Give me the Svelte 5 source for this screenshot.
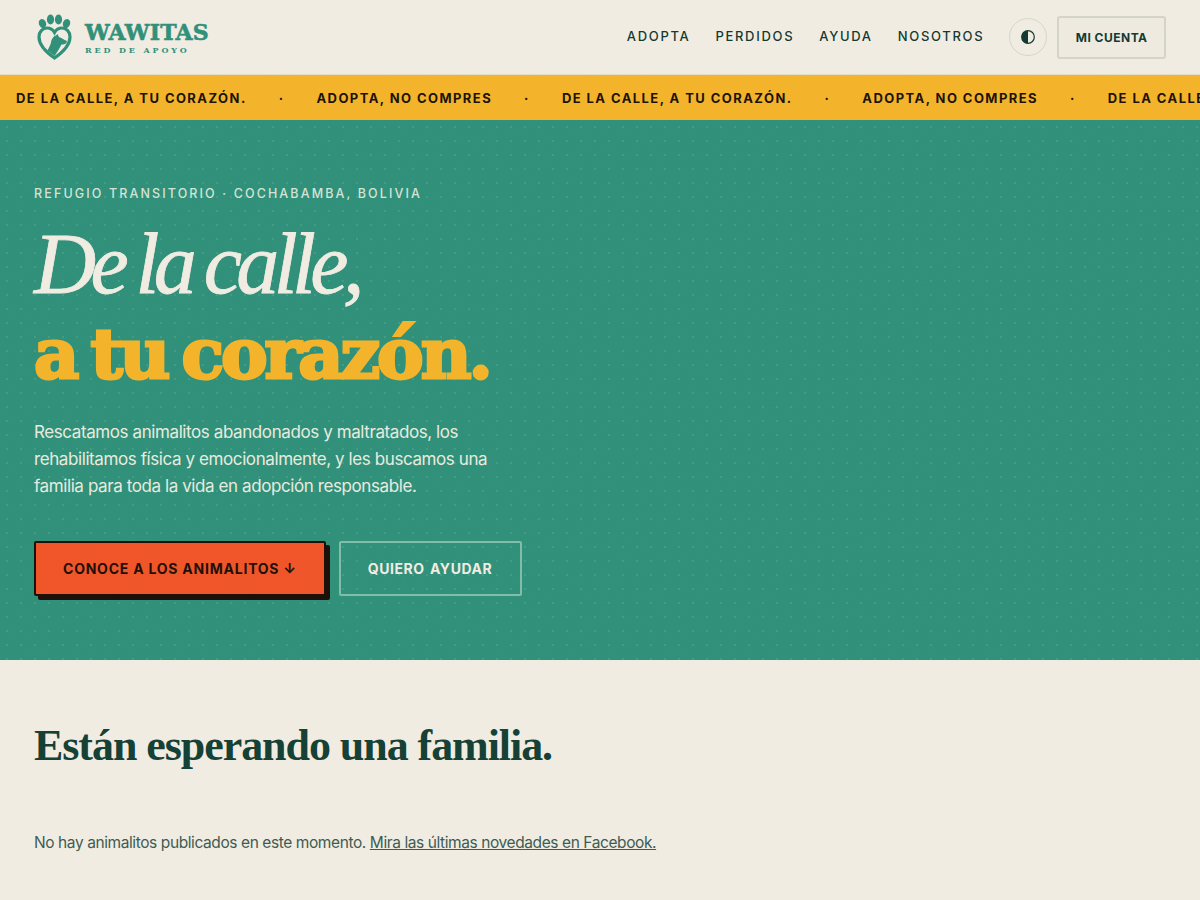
<script>
  const links = ['Adopta', 'Perdidos', 'Ayuda', 'Nosotros']
  const ticker = ['De la calle, a tu corazón.', 'Adopta, no compres', 'De la calle, a tu corazón.', 'Adopta, no compres', 'De la calle, a tu corazón.']
</script>

<header class="topbar">
  <a class="brand" href="#inicio">
    <svg class="logo" viewBox="0 0 38 48" width="38" height="48" aria-hidden="true">
      <ellipse cx="6.5" cy="9.5" rx="3.6" ry="4.6" transform="rotate(-20 6.5 9.5)" />
      <ellipse cx="14.5" cy="5.5" rx="3.6" ry="5" />
      <ellipse cx="22.5" cy="5.5" rx="3.6" ry="5" />
      <ellipse cx="30.5" cy="9.5" rx="3.6" ry="4.6" transform="rotate(20 30.5 9.5)" />
      <path class="heart" d="M18.5 44 C12 39.5 3 32.5 3 23 C3 17.5 7 14 11 14 C14.3 14 17 15.8 18.5 18.5 C20 15.8 22.7 14 26 14 C30 14 34 17.5 34 23 C34 32.5 25 39.5 18.5 44 Z" />
      <path d="M11.5 36.5 C13 33 14.5 31 15 28.5 C15.5 25 17.5 22 20 21.5 L21.5 20 L23 23 C25 24 28 25.5 31 27 C31 29.5 28.5 31 25.5 30.5 C24 33.5 22 37 18.5 42 Z" />
    </svg>
    <span class="brand-text">
      <strong>WAWITAS</strong>
      <small>RED DE APOYO</small>
    </span>
  </a>
  <nav class="nav">
    {#each links as link}
      <a href="#{link.toLowerCase()}">{link}</a>
    {/each}
  </nav>
  <button class="theme" aria-label="Cambiar tema">
    <svg viewBox="0 0 16 16" width="16" height="16">
      <circle cx="8" cy="8" r="6.3" fill="none" stroke="currentColor" stroke-width="1.2" />
      <path d="M8 1.7 A6.3 6.3 0 0 0 8 14.3 Z" fill="currentColor" />
    </svg>
  </button>
  <a class="account" href="#cuenta">Mi cuenta</a>
</header>

<div class="ticker">
  {#each ticker as item, i}
    <span>{item}</span>
    {#if i < ticker.length - 1}<i>·</i>{/if}
  {/each}
</div>

<section class="hero">
  <p class="eyebrow">Refugio transitorio · Cochabamba, Bolivia</p>
  <h1>
    <em>De la calle,</em>
    <b>a tu corazón.</b>
  </h1>
  <p class="lead">
    Rescatamos animalitos abandonados y maltratados, los rehabilitamos física y emocionalmente, y les buscamos una familia para toda la vida en adopción responsable.
  </p>
  <div class="actions">
    <a class="btn primary" href="#animalitos">Conoce a los animalitos <span class="arrow">↓</span></a>
    <a class="btn ghost" href="#ayuda">Quiero ayudar</a>
  </div>
</section>

<section class="waiting">
  <h2>Están esperando una familia.</h2>
  <p>No hay animalitos publicados en este momento. <a href="#facebook">Mira las últimas novedades en Facebook.</a></p>
</section>

<svg class="grain" aria-hidden="true">
  <filter id="grain-noise">
    <feTurbulence type="fractalNoise" baseFrequency="0.8" numOctaves="2" stitchTiles="stitch" />
    <feColorMatrix type="saturate" values="0" />
  </filter>
  <rect width="100%" height="100%" filter="url(#grain-noise)" />
</svg>

<style>
  :global(body) {
    background: #f1ece2;
    color: #12382f;
    font-family: 'Inter', 'Liberation Sans', sans-serif;
  }
  a {
    color: inherit;
    text-decoration: none;
  }
  .grain {
    position: fixed;
    inset: 0;
    width: 100%;
    height: 100%;
    opacity: 0.12;
    mix-blend-mode: soft-light;
    pointer-events: none;
  }
  .topbar {
    display: flex;
    align-items: center;
    height: 74px;
    padding: 0 34px 0 36px;
    border-bottom: 1px solid #e6dcc4;
  }
  .brand {
    display: flex;
    align-items: center;
    gap: 11px;
    margin-right: auto;
    color: #2f8f78;
  }
  .logo {
    fill: #2f8f78;
    margin-top: 1px;
  }
  .heart {
    fill: none;
    stroke: #2f8f78;
    stroke-width: 3.2;
  }
  .brand-text {
    display: flex;
    flex-direction: column;
    font-family: 'DejaVu Serif', serif;
  }
  .brand-text strong {
    font-size: 22px;
    line-height: 23px;
    font-weight: 700;
    letter-spacing: 0.01em;
    margin-top: 1px;
    -webkit-text-stroke: 0.6px #2f8f78;
  }
  .brand-text small {
    font-size: 8px;
    line-height: 10px;
    font-weight: 700;
    letter-spacing: 0.36em;
    margin-top: 1px;
  }
  .nav {
    display: flex;
    gap: 25px;
    margin-right: 25px;
    padding-bottom: 2px;
  }
  .nav a {
    font-size: 13px;
    font-weight: 500;
    letter-spacing: 0.13em;
    text-transform: uppercase;
  }
  .theme {
    display: flex;
    align-items: center;
    justify-content: center;
    width: 38px;
    height: 38px;
    padding: 0;
    margin-right: 10px;
    color: #12382f;
    background: none;
    border: 1px solid #d6d5ca;
    border-radius: 50%;
  }
  .account {
    display: flex;
    align-items: center;
    height: 43px;
    box-sizing: border-box;
    padding: 0 16.5px;
    font-size: 12px;
    font-weight: 700;
    letter-spacing: 0.04em;
    text-transform: uppercase;
    background: #eeeae0;
    border: 2px solid #d3d4c8;
    border-radius: 3px;
  }
  .ticker {
    display: flex;
    align-items: center;
    gap: 32px;
    height: 45px;
    padding-left: 16px;
    overflow: hidden;
    white-space: nowrap;
    background: #f3b32a;
    color: #1c1208;
    font-size: 13px;
    font-weight: 700;
    letter-spacing: 0.11em;
    text-transform: uppercase;
  }
  .ticker i {
    font-style: normal;
  }
  .hero {
    box-sizing: border-box;
    height: 540px;
    padding: 66px 34px 0;
    background-color: #2f8f78;
    background-image: radial-gradient(rgba(255, 255, 255, 0.09) 1px, transparent 1.2px);
    background-size: 14px 14px;
    color: #f1ece2;
  }
  .eyebrow {
    margin: 0;
    font-size: 12.5px;
    line-height: 16px;
    font-weight: 500;
    letter-spacing: 0.17em;
    text-transform: uppercase;
    color: #d5e3d6;
  }
  h1 {
    display: flex;
    flex-direction: column;
    margin: 18px 0 0;
    font-weight: 400;
  }
  h1 em {
    font-family: 'Liberation Serif', serif;
    font-size: 86px;
    line-height: 88px;
    letter-spacing: -0.065em;
    word-spacing: -0.04em;
    -webkit-text-stroke: 0.8px #f1ece2;
  }
  h1 b {
    margin-top: 2px;
    font-family: 'DejaVu Serif', serif;
    font-size: 70px;
    line-height: 88px;
    letter-spacing: -0.045em;
    word-spacing: -0.1em;
    color: #f3b32a;
    -webkit-text-stroke: 3px #f3b32a;
  }
  .lead {
    width: 470px;
    margin: 21px 0 0;
    font-size: 17px;
    line-height: 27px;
    letter-spacing: -0.024em;
    color: #e7ebdf;
  }
  .actions {
    display: flex;
    gap: 13px;
    margin-top: 41px;
  }
  .btn {
    display: flex;
    align-items: center;
    box-sizing: border-box;
    height: 55px;
    padding: 0 27px;
    font-size: 14px;
    font-weight: 700;
    letter-spacing: 0.055em;
    text-transform: uppercase;
    border-radius: 2px;
  }
  .primary {
    gap: 4px;
    color: #1c0f08;
    background: #ef5428;
    border: 2px solid #1c0f08;
    box-shadow: 4px 4px 0 #1c0f08;
  }
  .ghost {
    padding-right: 28px;
    color: #f1ece2;
    border: 2px solid #7fbcaa;
    letter-spacing: 0.04em;
    word-spacing: 0.1em;
  }
  .waiting {
    padding: 60px 34px 40px;
  }
  h2 {
    margin: 0;
    font-family: 'Liberation Serif', serif;
    font-size: 44px;
    line-height: 52px;
    font-weight: 700;
    letter-spacing: -0.024em;
    color: #143f35;
  }
  .waiting p {
    margin: 59px 0 0;
    font-size: 15.5px;
    line-height: 24px;
    letter-spacing: -0.41px;
    color: #3c5a50;
  }
  .waiting p a {
    text-decoration: underline;
  }
</style>
